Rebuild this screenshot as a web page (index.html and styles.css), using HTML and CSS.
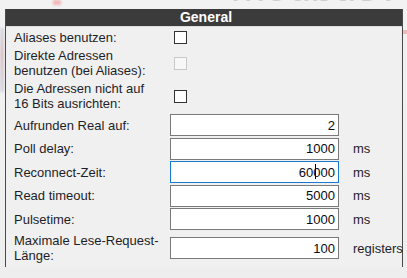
FILE: index.html
```html
<!DOCTYPE html>
<html>
<head>
<meta charset="utf-8">
<link rel="stylesheet" href="styles.css">
</head>
<body>
<div class="backdrop">
  <span class="watermark">modbus A</span>
  <span class="blip blip-top"></span>
  <span class="blip blip-right"></span>
  <span class="edge"></span>
</div>
<div class="page">
  <div class="panel">
    <div class="header">General</div>
    <div class="rows">
      <div class="row r1">
        <div class="label">Aliases benutzen:</div>
        <div class="ctl"><span class="cb"></span></div>
        <div class="unit"></div>
      </div>
      <div class="row r2">
        <div class="label">Direkte Adressen<br>benutzen (bei Aliases):</div>
        <div class="ctl"><span class="cb disabled"></span></div>
        <div class="unit"></div>
      </div>
      <div class="row r3">
        <div class="label">Die Adressen nicht auf<br>16 Bits ausrichten:</div>
        <div class="ctl"><span class="cb"></span></div>
        <div class="unit"></div>
      </div>
      <div class="row r24">
        <div class="label">Aufrunden Real auf:</div>
        <div class="ctl"><input class="num" type="text" value="2"></div>
        <div class="unit"></div>
      </div>
      <div class="row r23">
        <div class="label">Poll delay:</div>
        <div class="ctl"><input class="num" type="text" value="1000"></div>
        <div class="unit">ms</div>
      </div>
      <div class="row r24">
        <div class="label">Reconnect-Zeit:</div>
        <div class="ctl"><span class="field"><input class="num focus" type="text" value="60000"><span class="caret"></span></span></div>
        <div class="unit">ms</div>
      </div>
      <div class="row r23">
        <div class="label">Read timeout:</div>
        <div class="ctl"><input class="num" type="text" value="5000"></div>
        <div class="unit">ms</div>
      </div>
      <div class="row r24">
        <div class="label">Pulsetime:</div>
        <div class="ctl"><input class="num" type="text" value="1000"></div>
        <div class="unit">ms</div>
      </div>
      <div class="row r9">
        <div class="label">Maximale Lese-Request-<br>Länge:</div>
        <div class="ctl"><input class="num" type="text" value="100"></div>
        <div class="unit">registers</div>
      </div>
    </div>
  </div>
</div>
</body>
</html>
```

FILE: styles.css
```css
html, body {
  margin: 0;
  padding: 0;
}
body {
  width: 407px;
  height: 278px;
  overflow: hidden;
  background: #efefef;
  font-family: "Liberation Sans", Arial, sans-serif;
  font-size: 13px;
  color: #1e1e28;
  position: relative;
}
.backdrop {
  position: absolute;
  inset: 0;
  overflow: hidden;
  background: linear-gradient(180deg, #f2f2f2 0%, #eeeeee 100%);
}
.watermark {
  position: absolute;
  left: 231px;
  top: -37px;
  font-size: 41px;
  line-height: 48px;
  color: #cfcfcf;
  white-space: nowrap;
  font-family: "Liberation Sans", Arial, sans-serif;
}
.blip {
  position: absolute;
  background: #f3b8b8;
}
.blip-top {
  left: 53px;
  top: 0;
  width: 8px;
  height: 5px;
  filter: blur(1px);
}
.blip-right {
  left: 403px;
  top: 30px;
  width: 4px;
  height: 4px;
}
.edge {
  position: absolute;
  left: 0;
  top: 28px;
  width: 4px;
  height: 64px;
  background: linear-gradient(180deg, #d9dbe4 0%, #d9c4c8 40%, #d6d8e2 100%);
  filter: blur(1px);
}
.page {
  position: relative;
  padding: 9px 0 0 5px;
}
.panel {
  width: 396px;
  border-left: 1px solid #4a4a4a;
  border-right: 1px solid #4a4a4a;
  background: #f0f0f0;
  padding-bottom: 2px;
}
.header {
  height: 17px;
  line-height: 17px;
  background: #3b3b3b;
  color: #ffffff;
  font-weight: bold;
  font-size: 14px;
  text-align: center;
  padding-left: 4px;
  border-bottom: 1px solid #dcdcdc;
}
.rows {
  display: flex;
  flex-direction: column;
}
.row {
  display: grid;
  grid-template-columns: 156px 169px 14px auto;
  grid-template-areas: "label ctl . unit";
  align-items: center;
  padding-left: 8px;
}
.r1 { height: 20px; }
.r2 { height: 32px; }
.r3 { height: 34px; }
.r24 { height: 24px; }
.r23 { height: 23px; }
.r9 { height: 34px; }
.label {
  grid-area: label;
  line-height: 15px;
  white-space: nowrap;
}
.ctl {
  grid-area: ctl;
  display: flex;
  align-items: center;
}
.unit {
  grid-area: unit;
  white-space: nowrap;
  line-height: 15px;
}
.cb {
  display: block;
  width: 11px;
  height: 11px;
  margin-left: 4px;
  border: 1px solid #333333;
  background: #ffffff;
}
.cb.disabled {
  border-color: #c9c9c9;
  background: #f7f7f7;
}
.field {
  position: relative;
  display: block;
}
.num {
  display: block;
  box-sizing: border-box;
  width: 169px;
  height: 22px;
  margin: 0;
  padding: 0 3px 0 3px;
  border: 1px solid #7a7a7a;
  background: #ffffff;
  font-family: "Liberation Sans", Arial, sans-serif;
  font-size: 13px;
  color: #0a0a14;
  text-align: right;
  outline: none;
}
.num.focus {
  border-color: #1a78d2;
}
.caret {
  position: absolute;
  left: 145px;
  top: 3px;
  width: 1px;
  height: 15px;
  background: #000000;
}
```
